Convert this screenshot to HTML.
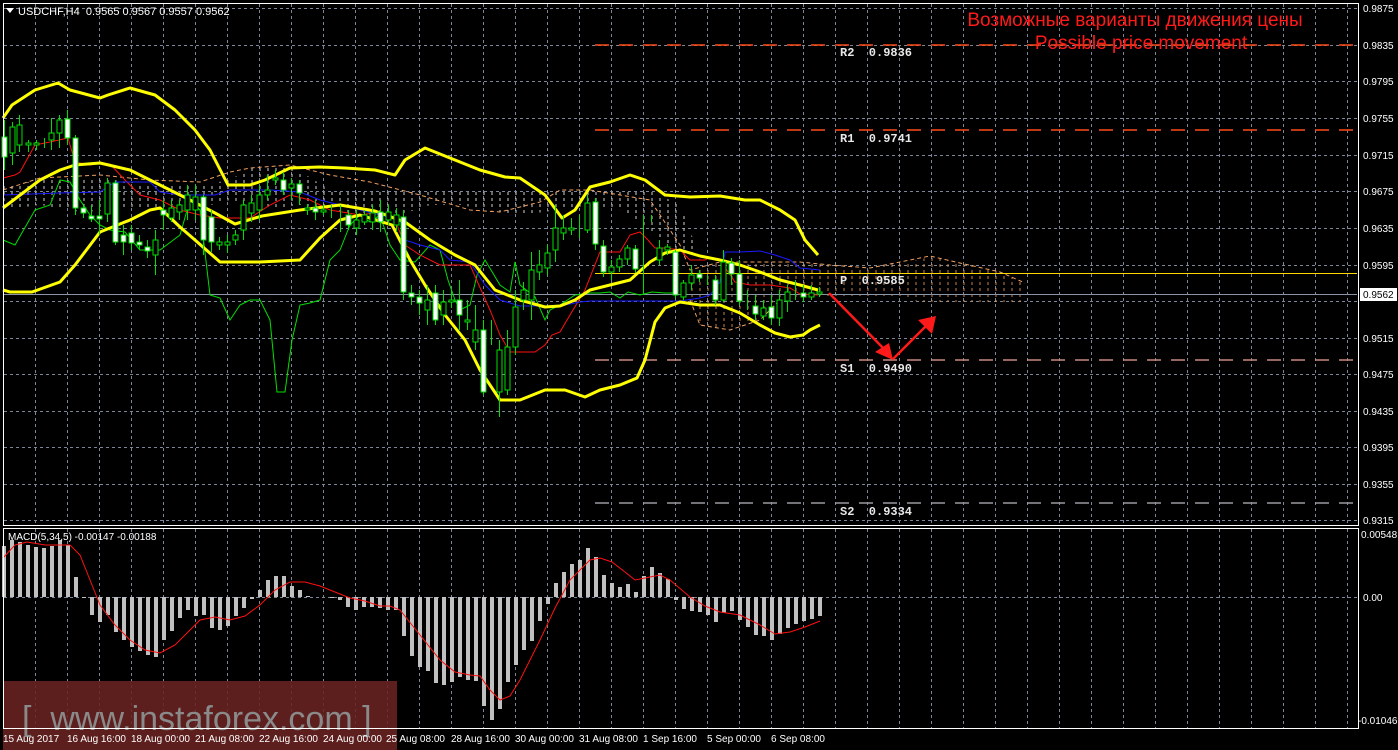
<!DOCTYPE html>
<html><head><meta charset="utf-8"><style>
html,body{margin:0;padding:0;background:#000;width:1398px;height:750px;overflow:hidden}
svg{display:block}
text{font-family:"Liberation Sans",sans-serif}
</style></head><body>
<svg width="1398" height="750" viewBox="0 0 1398 750" xmlns="http://www.w3.org/2000/svg">
<defs>
<pattern id="pw" width="8" height="6" patternUnits="userSpaceOnUse"><line x1="4" y1="0" x2="4" y2="3" stroke="#cfcfcf" stroke-width="1"/></pattern>
<pattern id="po" width="8" height="6" patternUnits="userSpaceOnUse"><line x1="4" y1="0" x2="4" y2="3" stroke="#f0a060" stroke-width="1"/></pattern>
</defs>
<rect width="1398" height="750" fill="#000"/>
<g stroke="#7b8798" stroke-width="1" stroke-dasharray="3,3">
<path d="M35.5 4V525M67.5 4V525M99.5 4V525M131.5 4V525M163.5 4V525M195.5 4V525M227.5 4V525M259.5 4V525M291.5 4V525M323.5 4V525M355.5 4V525M387.5 4V525M419.5 4V525M451.5 4V525M483.5 4V525M515.5 4V525M547.5 4V525M579.5 4V525M611.5 4V525M643.5 4V525M675.5 4V525M707.5 4V525M739.5 4V525M771.5 4V525M803.5 4V525M835.5 4V525M867.5 4V525M899.5 4V525M931.5 4V525M963.5 4V525M995.5 4V525M1027.5 4V525M1059.5 4V525M1091.5 4V525M1123.5 4V525M1155.5 4V525M1187.5 4V525M1219.5 4V525M1251.5 4V525M1283.5 4V525M1315.5 4V525M1347.5 4V525"/>
<path d="M35.5 529V728M67.5 529V728M131.5 529V728M195.5 529V728M259.5 529V728M323.5 529V728M387.5 529V728M419.5 529V728M451.5 529V728M483.5 529V728M515.5 529V728M547.5 529V728M579.5 529V728M611.5 529V728M643.5 529V728M675.5 529V728M707.5 529V728M739.5 529V728M771.5 529V728M803.5 529V728M835.5 529V728M867.5 529V728M899.5 529V728M931.5 529V728M963.5 529V728M995.5 529V728M1027.5 529V728M1059.5 529V728M1091.5 529V728M1123.5 529V728M1155.5 529V728M1187.5 529V728M1219.5 529V728M1251.5 529V728M1283.5 529V728M1315.5 529V728M1347.5 529V728M99.5 529V728M163.5 529V728M227.5 529V728M291.5 529V728M355.5 529V728"/>
<path d="M4 8.5H1357M4 45.5H1357M4 81.5H1357M4 118.5H1357M4 155.5H1357M4 191.5H1357M4 228.5H1357M4 265.5H1357M4 301.5H1357M4 338.5H1357M4 374.5H1357M4 411.5H1357M4 447.5H1357M4 484.5H1357M4 520.5H1357M4 597.5H1357"/>
</g>
<polygon fill="url(#pw)" points="3,185 60,178 100,178 150,185 200,185 230,180 250,168 290,165 330,190 370,190 420,190 470,192 520,190 560,190 590,190 620,190 650,190 680,205 690,230 700,260 680,255 650,230 620,210 590,205 560,210 520,215 490,210 460,205 430,205 400,215 370,215 340,212 300,205 260,210 230,200 200,208 160,208 120,210 80,212 40,205 3,210"/>
<polygon fill="url(#po)" opacity="0.8" points="690,270 720,262 760,262 800,262 830,265 870,268 900,262 920,260 930,256 960,263 1000,272 1025,283 1025,302 960,302 920,302 900,296 860,296 820,296 780,300 760,320 730,330 700,325 690,300"/>
<polyline fill="none" stroke="#f0a060" stroke-dasharray="4,3" points="3,190 40,178 100,175 150,180 200,182 230,172 250,168 290,165 330,175 370,182 420,195 470,210 500,212 540,202 560,190 590,190 620,195 650,200 680,245 690,270 720,262 760,262 800,262 830,265 870,268 900,262 930,256 960,263 1000,272 1025,283"/>
<polyline fill="none" stroke="#f0a060" stroke-dasharray="4,3" points="690,300 700,325 730,330 760,320 780,300"/>
<g stroke-dasharray="14,10" stroke-width="1.5">
<line x1="595" y1="45" x2="1357" y2="45" stroke="#ff4a1a"/>
<line x1="595" y1="130" x2="1357" y2="130" stroke="#ff4a1a"/>
<line x1="595" y1="360" x2="1357" y2="360" stroke="#c88a80"/>
<line x1="595" y1="503" x2="1357" y2="503" stroke="#9a9aa0"/>
</g>
<line x1="595" y1="273.5" x2="1357" y2="273.5" stroke="#ffd700" stroke-width="1"/>
<line x1="4" y1="294.5" x2="1357" y2="294.5" stroke="#8a96a8" stroke-width="1"/>
<polyline fill="none" stroke="#00e000" stroke-width="1" points="3,240 15,245 35,210 50,205 60,180 70,182 80,200 90,215 100,225 110,230 125,232 140,250 160,250 180,235 190,200 200,210 210,295 220,298 230,320 240,305 250,300 260,300 270,320 277,392 285,392 292,340 300,305 310,303 320,300 330,260 340,250 350,225 360,215 370,222 380,215 390,245 400,260 415,262 430,245 440,250 448,280 455,300 460,310 470,305 477,275 485,260 500,285 510,292 515,262 520,285 535,297 545,320 550,310 560,305 575,295 590,293 600,293 610,292 620,298 628,292 640,295 652,292 665,293 675,293"/>
<polyline fill="none" stroke="#ff1010" stroke-width="1" points="3,178 15,175 20,172 35,145 50,142 68,138 75,162 90,165 100,163 110,164 125,180 140,195 160,200 180,210 200,215 220,218 250,218 270,205 290,195 310,200 330,210 360,215 380,212 395,220 405,245 420,255 440,265 470,265 490,310 500,335 510,352 535,352 545,345 552,335 560,332 570,315 585,290 600,252 620,252 630,235 640,232 648,240 655,248 665,248 680,250 690,260 705,260 710,257 720,260 735,282 750,285 770,285 790,288 800,294 818,295"/>
<polyline fill="none" stroke="#1a1aff" stroke-width="1" points="3,195 60,193 100,192 115,182 150,182 160,192 180,195 215,195 230,190 270,190 300,192 320,200 340,205 380,215 400,220 405,240 420,245 440,250 450,260 470,262 485,285 500,300 520,306 560,306 580,302 590,301 680,301 700,298 710,295 720,282 725,252 740,252 760,251 775,255 790,260 800,268 820,270"/>
<g fill="none" stroke="#ffff00" stroke-width="3" stroke-linejoin="round">
<polyline points="3,118 12,105 35,90 58,83 70,90 100,98 108,95 130,88 155,95 175,110 195,130 210,150 228,185 250,185 265,180 290,168 320,167 345,168 375,170 395,175 405,160 425,148 455,160 480,170 505,177 520,178 545,195 562,218 575,210 590,187 610,182 630,175 645,180 665,195 690,197 720,196 745,200 760,200 780,210 795,220 805,240 818,255"/>
<polyline points="3,208 40,180 60,170 75,165 100,163 130,170 160,185 190,200 215,213 235,224 262,216 300,210 340,205 375,211 405,222 430,240 455,255 475,265 495,290 520,300 545,307 560,306 575,300 590,290 610,285 630,280 650,262 665,253 680,250 700,256 720,260 740,265 760,272 780,280 800,285 818,290"/>
<polyline points="3,290 10,292 32,292 60,282 75,265 100,232 110,228 130,220 150,210 160,208 180,227 195,240 220,262 260,262 300,260 320,238 340,220 360,215 392,225 410,260 425,285 445,315 465,340 480,370 500,400 520,400 545,390 565,390 585,397 600,390 620,385 637,378 645,360 655,322 665,308 680,302 700,305 720,305 740,313 760,325 775,333 790,337 803,335 810,330 820,325"/>
</g>
<path stroke="#00e000" stroke-width="1" fill="none" d="M4.5 120V170M12.5 122V165M19.5 115V152M28.5 140V152M36.5 140V150M44.5 138V148M51.5 118V150M59.5 115V148M67.5 110V145M75.5 135V215M83.5 205V218M91.5 205V222M99.5 200V235M107.5 178V222M115.5 180V245M123.5 225V255M131.5 225V250M139.5 235V250M147.5 240V258M155.5 230V275M163.5 200V230M171.5 200V222M179.5 200V220M187.5 185V220M195.5 185V220M203.5 195V255M211.5 210V252M219.5 237V250M227.5 235V253M235.5 230V245M243.5 200V240M251.5 195V222M259.5 185V220M267.5 175V200M275.5 170V185M283.5 172V195M291.5 178V200M299.5 180V205M307.5 204V215M315.5 200V220M323.5 205V215M331.5 205V218M340.5 205V232M348.5 210V230M356.5 210V235M364.5 210V225M372.5 205V230M380.5 200V232M388.5 205V225M396.5 208V232M403.5 210V300M411.5 285V305M419.5 290V315M427.5 285V325M435.5 285V325M443.5 290V325M451.5 290V308M459.5 280V330M467.5 300V330M475.5 305V350M483.5 320V395M491.5 320V345M499.5 340V417M507.5 330V395M515.5 290V355M523.5 282V310M531.5 252V320M539.5 250V280M547.5 245V275M555.5 205V262M563.5 215V240M571.5 218V235M579.5 215V238M587.5 195V233M595.5 198V250M603.5 240V277M611.5 260V280M619.5 255V272M627.5 245V265M635.5 245V273M643.5 215V295M651.5 215V222M659.5 240V265M667.5 244V255M675.5 250V298M683.5 280V300M691.5 265V290M699.5 270V282M707.5 275V285M715.5 275V305M723.5 250V302M731.5 258V285M739.5 260V305M747.5 290V310M755.5 295V320M763.5 300V320M771.5 295V325M779.5 290V326M787.5 285V312M795.5 280V300M803.5 285V302M811.5 285V300M819.5 287V297"/>
<path fill="#fff" stroke="#00e000" stroke-width="1" d="M2 137h5v20h-5zM65 119h5v19h-5zM73 138h5v70h-5zM81 208h5v5h-5zM89 216h5v3h-5zM97 216h5v3h-5zM113 183h5v59h-5zM121 235h5v7h-5zM129 233h5v10h-5zM137 242h5v3h-5zM145 247h5v4h-5zM161 210h5v5h-5zM201 197h5v43h-5zM209 217h5v25h-5zM281 180h5v10h-5zM297 184h5v9h-5zM313 208h5v4h-5zM346 215h5v10h-5zM378 212h5v10h-5zM401 217h5v75h-5zM409 293h5v4h-5zM417 297h5v6h-5zM433 293h5v27h-5zM457 300h5v15h-5zM481 330h5v62h-5zM593 202h5v42h-5zM601 246h5v26h-5zM633 249h5v20h-5zM673 252h5v43h-5zM697 274h5v4h-5zM713 280h5v20h-5zM729 263h5v11h-5zM737 274h5v27h-5zM753 306h5v8h-5zM769 307h5v11h-5zM801 293h5v4h-5z"/>
<path fill="#000" stroke="#00e000" stroke-width="1" d="M10 127h5v26h-5zM17 125h5v20h-5zM26 143h5v2h-5zM34 143h5v2h-5zM49 133h5v7h-5zM57 120h5v13h-5zM105 183h5v31h-5zM153 240h5v15h-5zM169 208h5v10h-5zM177 205h5v7h-5zM185 195h5v15h-5zM193 197h5v13h-5zM217 242h5v3h-5zM225 242h5v3h-5zM233 235h5v5h-5zM241 205h5v25h-5zM249 203h5v10h-5zM257 195h5v15h-5zM265 190h5v5h-5zM273 178h5v2h-5zM289 184h5v4h-5zM305 208h5v2h-5zM321 210h5v2h-5zM354 220h5v8h-5zM362 215h5v7h-5zM370 213h5v9h-5zM386 212h5v8h-5zM394 215h5v10h-5zM425 300h5v10h-5zM441 302h5v13h-5zM449 300h5v2h-5zM465 320h5v2h-5zM473 330h5v12h-5zM497 350h5v42h-5zM505 347h5v43h-5zM513 307h5v40h-5zM521 290h5v10h-5zM529 270h5v30h-5zM537 265h5v7h-5zM545 253h5v15h-5zM553 228h5v22h-5zM561 228h5v5h-5zM569 228h5v2h-5zM585 203h5v27h-5zM609 267h5v5h-5zM617 259h5v8h-5zM625 248h5v11h-5zM657 248h5v12h-5zM665 247h5v3h-5zM681 283h5v14h-5zM689 275h5v8h-5zM721 262h5v38h-5zM761 308h5v8h-5zM777 300h5v18h-5zM785 292h5v9h-5zM809 293h5v4h-5zM817 292h5v2h-5z"/>
<g stroke="#ff1a1a" stroke-width="2.5" fill="#ff1a1a">
<line x1="829" y1="293" x2="890" y2="355"/>
<line x1="893" y1="359" x2="930" y2="322"/>
</g>
<polygon fill="#ff1a1a" points="893,360 875,352 889,343"/>
<polygon fill="#ff1a1a" points="936,316 918,320 932,334"/>
<g style="font-family:'Liberation Mono',monospace;font-size:12px;font-weight:bold;white-space:pre" fill="#e8e8e8">
<text x="840" y="56" style="font-family:'Liberation Mono',monospace;white-space:pre">R2  0.9836</text>
<text x="840" y="142" style="font-family:'Liberation Mono',monospace;white-space:pre">R1  0.9741</text>
<text x="840" y="284" style="font-family:'Liberation Mono',monospace;white-space:pre">P  0.9585</text>
<text x="840" y="372" style="font-family:'Liberation Mono',monospace;white-space:pre">S1  0.9490</text>
<text x="840" y="515" style="font-family:'Liberation Mono',monospace;white-space:pre">S2  0.9334</text>
</g>
<text x="1135" y="26" font-size="19" fill="#ff1a1a" text-anchor="middle" style="font-family:'Liberation Sans','DejaVu Sans',sans-serif">Возможные варианты движения цены</text>
<text x="1141" y="49" font-size="19" fill="#ff1a1a" text-anchor="middle">Possible price movement</text>
<polygon points="6,8 14,8 10,13" fill="#fff"/>
<text x="18" y="15" font-size="11" fill="#fff" style="white-space:pre">USDCHF,H4  0.9565 0.9567 0.9557 0.9562</text>
<path stroke="#c0c0c0" stroke-width="4" fill="none" d="M4 597v-51M12 597v-57M20 597v-55M28 597v-52M36 597v-50M44 597v-49M52 597v-51M60 597v-57M68 597v-52M76 597v-20M84 597v1M92 597v18M100 597v25M108 597v18M116 597v35M124 597v43M132 597v50M140 597v54M148 597v58M156 597v60M164 597v43M172 597v34M180 597v21M188 597v13M196 597v19M204 597v18M212 597v31M220 597v33M228 597v29M236 597v19M244 597v11M252 597v2M260 597v-7M268 597v-17M276 597v-21M284 597v-21M292 597v-11M300 597v-7M308 597v-1M332 597v1M340 597v3M348 597v10M356 597v13M364 597v10M372 597v10M380 597v11M388 597v13M396 597v13M404 597v39M412 597v59M420 597v70M428 597v74M436 597v86M444 597v88M452 597v85M460 597v80M468 597v83M476 597v84M484 597v109M492 597v123M500 597v112M508 597v85M516 597v68M524 597v53M532 597v44M540 597v24M548 597v7M556 597v-14M564 597v-25M572 597v-33M580 597v-37M588 597v-49M596 597v-40M604 597v-22M612 597v-14M620 597v-10M628 597v-13M636 597v-5M644 597v-21M652 597v-30M660 597v-24M668 597v-18M676 597v3M684 597v12M692 597v14M700 597v15M708 597v18M716 597v25M724 597v16M732 597v14M740 597v23M748 597v30M756 597v38M764 597v39M772 597v43M780 597v37M788 597v31M796 597v27M804 597v24M812 597v22M820 597v19"/>
<polyline fill="none" stroke="#ff1010" stroke-width="1" points="3,558 15,545 27,542 45,545 70,545 80,555 90,580 100,605 115,625 130,640 145,650 160,653 175,645 190,630 200,620 215,617 230,620 245,616 260,605 275,590 290,582 305,582 320,586 335,592 350,598 365,601 380,606 390,606 400,610 420,635 440,660 455,672 470,675 480,676 490,690 500,700 510,696 520,680 540,640 555,608 570,580 590,560 600,558 612,562 625,572 635,580 645,578 660,575 670,580 690,597 705,606 720,612 740,615 760,625 775,634 790,632 805,627 820,621"/>
<text x="8" y="540" font-size="10" fill="#fff">MACD(5,34,5) -0.00147 -0.00188</text>
<rect x="3" y="681" width="394" height="69" fill="#6a2222" opacity="0.88"/>
<text x="22" y="730" font-size="34" fill="#8a8a8a" style="white-space:pre">[  www.instaforex.com ]</text>
<rect x="3.5" y="3.5" width="1355" height="522" fill="none" stroke="#fff" stroke-width="1"/>
<rect x="3.5" y="528.5" width="1355" height="200" fill="none" stroke="#fff" stroke-width="1"/>
<g font-size="10" fill="#fff">
<text x="1363" y="12">0.9875</text><text x="1363" y="49">0.9835</text><text x="1363" y="85">0.9795</text><text x="1363" y="122">0.9755</text><text x="1363" y="159">0.9715</text><text x="1363" y="195">0.9675</text><text x="1363" y="232">0.9635</text><text x="1363" y="269">0.9595</text><text x="1363" y="342">0.9515</text><text x="1363" y="378">0.9475</text><text x="1363" y="415">0.9435</text><text x="1363" y="451">0.9395</text><text x="1363" y="488">0.9355</text><text x="1363" y="524">0.9315</text>
<text x="1361" y="538">0.00548</text><text x="1363" y="601">0.00</text><text x="1358" y="724">-0.01046</text>
</g>
<rect x="1360" y="288" width="37" height="13" fill="#fff"/>
<text x="1363" y="298" font-size="10" fill="#000">0.9562</text>
<g font-size="10" fill="#fff">
<text x="3" y="742">15 Aug 2017</text><text x="67" y="742">16 Aug 16:00</text><text x="131" y="742">18 Aug 00:00</text><text x="195" y="742">21 Aug 08:00</text><text x="259" y="742">22 Aug 16:00</text><text x="323" y="742">24 Aug 00:00</text><text x="386" y="742">25 Aug 08:00</text><text x="451" y="742">28 Aug 16:00</text><text x="515" y="742">30 Aug 00:00</text><text x="579" y="742">31 Aug 08:00</text><text x="643" y="742">1 Sep 16:00</text><text x="707" y="742">5 Sep 00:00</text><text x="771" y="742">6 Sep 08:00</text>
</g>
</svg>
</body></html>
